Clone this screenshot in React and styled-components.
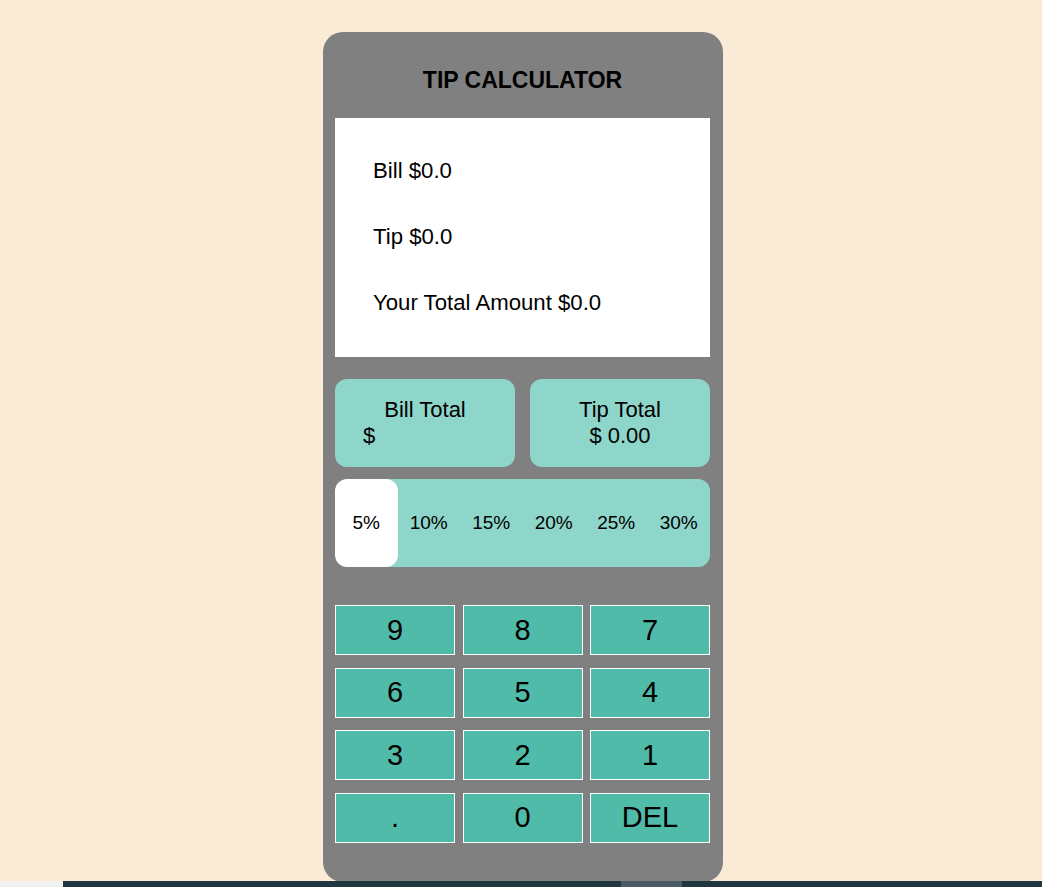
import React, { useState } from 'react'
import styled, { createGlobalStyle } from 'styled-components'

const GlobalStyle = createGlobalStyle`
  html, body {
    margin: 0;
    padding: 0;
    background: #faebd7;
    font-family: 'Liberation Sans', Arial, sans-serif;
    overflow: hidden;
  }
`

const Page = styled.div`
  min-height: 100vh;
  display: flex;
  justify-content: center;
  align-items: flex-start;
  padding: 32px 0 0 4px;
  box-sizing: border-box;
`

const Card = styled.div`
  width: 400px;
  height: 850px;
  box-sizing: border-box;
  background: #808080;
  border-radius: 20px;
  padding: 0 13px 0 12px;
  display: flex;
  flex-direction: column;
`

const Title = styled.h1`
  margin: 0;
  height: 86px;
  display: flex;
  align-items: center;
  justify-content: center;
  font-size: 23px;
  font-weight: 700;
  color: #000;
  padding-top: 10px;
  box-sizing: border-box;
`

const Display = styled.div`
  background: #fff;
  height: 239px;
  padding: 40px 38px 0;
  box-sizing: border-box;
  display: flex;
  flex-direction: column;
  gap: 40px;
`

const Line = styled.p`
  margin: 0;
  font-size: 22.2px;
  line-height: 26px;
  color: #000;
`

const Totals = styled.div`
  display: grid;
  grid-template-columns: 180px 180px;
  justify-content: space-between;
  margin-top: 22px;
`

const TotalBox = styled.div`
  background: #8ed6ca;
  border-radius: 12px;
  height: 88px;
  display: flex;
  flex-direction: column;
  justify-content: center;
  align-items: center;
  font-size: 22px;
  line-height: 26px;
  color: #000;
`

const InputRow = styled.div`
  align-self: stretch;
  padding-left: ${p => p.$indent}px;
  text-align: ${p => (p.$indent ? 'left' : 'center')};
`

const Percents = styled.div`
  margin-top: 12px;
  height: 88px;
  background: #8ed6ca;
  border-radius: 12px;
  display: grid;
  grid-template-columns: repeat(6, 1fr);
  overflow: hidden;
`

const Percent = styled.button`
  border: none;
  border-radius: ${p => (p.$active ? '12px' : '0')};
  background: ${p => (p.$active ? '#fff' : 'transparent')};
  font-family: inherit;
  font-size: 19px;
  color: #000;
  padding: 0;
  cursor: pointer;
`

const Keypad = styled.div`
  margin-top: 38px;
  display: grid;
  grid-template-columns: repeat(3, 1fr);
  column-gap: 7.5px;
  row-gap: 12.67px;
`

const Key = styled.button`
  height: 50px;
  background: #51bba9;
  border: 1px solid #fff;
  font-family: inherit;
  font-size: 29px;
  color: #000;
  padding: 0;
  cursor: pointer;
`

const TaskStrip = styled.div`
  position: fixed;
  left: 0;
  right: 0;
  bottom: 0;
  height: 6px;
  display: grid;
  grid-template-columns: 63px 558px 61px 1fr;
`

const StripPart = styled.div`
  background: ${p => p.$color};
`

const percents = [5, 10, 15, 20, 25, 30]
const keys = ['9', '8', '7', '6', '5', '4', '3', '2', '1', '.', '0', 'DEL']

export default function App() {
  const [tip, setTip] = useState(5)

  return (
    <>
      <GlobalStyle />
      <Page>
        <Card>
          <Title>TIP CALCULATOR</Title>
          <Display>
            <Line>Bill $0.0</Line>
            <Line>Tip $0.0</Line>
            <Line>Your Total Amount $0.0</Line>
          </Display>
          <Totals>
            <TotalBox>
              <div>Bill Total</div>
              <InputRow $indent={28}>$</InputRow>
            </TotalBox>
            <TotalBox>
              <div>Tip Total</div>
              <InputRow>$ 0.00</InputRow>
            </TotalBox>
          </Totals>
          <Percents>
            {percents.map(p => (
              <Percent key={p} $active={tip === p} onClick={() => setTip(p)}>
                {p}%
              </Percent>
            ))}
          </Percents>
          <Keypad>
            {keys.map(k => (
              <Key key={k}>{k}</Key>
            ))}
          </Keypad>
        </Card>
      </Page>
      <TaskStrip>
        <StripPart $color="#f0f0f0" />
        <StripPart $color="#203640" />
        <StripPart $color="#4b5b65" />
        <StripPart $color="#203640" />
      </TaskStrip>
    </>
  )
}
